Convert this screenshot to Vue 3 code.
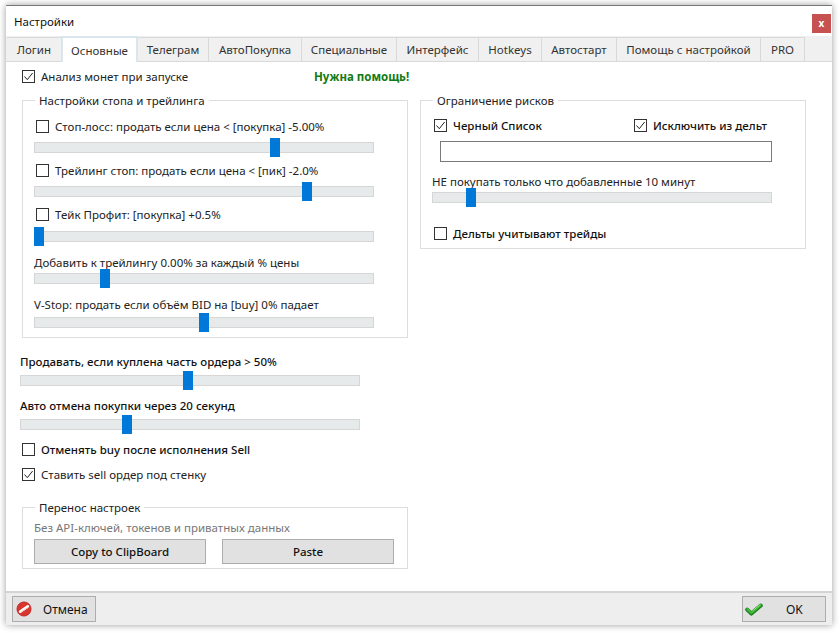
<script setup>
const tabs = [
  { label: 'Логин', w: 55 },
  { label: 'Основные', w: 77, active: true },
  { label: 'Телеграм', w: 71 },
  { label: 'АвтоПокупка', w: 93 },
  { label: 'Специальные', w: 95 },
  { label: 'Интерфейс', w: 82 },
  { label: 'Hotkeys', w: 63 },
  { label: 'Автостарт', w: 75 },
  { label: 'Помощь с настройкой', w: 144 },
  { label: 'PRO', w: 44 }
]
const pct = (center) => ({ left: `${center - 6}px` })
</script>

<template>
  <div class="page">
    <div class="window">
      <header class="title">
        <span>Настройки</span>
        <button class="close">x</button>
      </header>
      <nav class="tabs">
        <div v-for="t in tabs" :key="t.label" class="tab" :class="{ active: t.active }" :style="{ width: t.w + 'px' }">{{ t.label }}</div>
      </nav>
      <main class="content">
        <div class="top-row">
          <label class="check top-check"><span class="box"><svg viewBox="0 0 11 11"><path d="M1.5 5.5 4.3 8.7 9.6 2" /></svg></span>Анализ монет при запуске</label>
          <span class="help">Нужна помощь!</span>
        </div>
        <div class="columns">
          <fieldset class="group stop">
            <legend>Настройки стопа и трейлинга</legend>
            <label class="check c1"><span class="box"></span>Стоп-лосс: продать если цена &lt; [покупка] -5.00%</label>
            <div class="track t1"><i class="thumb" :style="pct(241)"></i></div>
            <label class="check c2"><span class="box"></span>Трейлинг стоп: продать если цена &lt; [пик] -2.0%</label>
            <div class="track t2"><i class="thumb" :style="pct(273)"></i></div>
            <label class="check c3"><span class="box"></span>Тейк Профит: [покупка] +0.5%</label>
            <div class="track t3"><i class="thumb" :style="pct(5)"></i></div>
            <p class="line l1">Добавить к трейлингу 0.00% за каждый % цены</p>
            <div class="track t4"><i class="thumb" :style="pct(71)"></i></div>
            <p class="line l2">V-Stop: продать если объём BID на [buy] 0% падает</p>
            <div class="track t5"><i class="thumb" :style="pct(170)"></i></div>
          </fieldset>
          <fieldset class="group risk">
            <legend>Ограничение рисков</legend>
            <div class="risk-checks">
              <label class="check strong"><span class="box"><svg viewBox="0 0 11 11"><path d="M1.5 5.5 4.3 8.7 9.6 2" /></svg></span>Черный Список</label>
              <label class="check strong"><span class="box"><svg viewBox="0 0 11 11"><path d="M1.5 5.5 4.3 8.7 9.6 2" /></svg></span>Исключить из дельт</label>
            </div>
            <div class="input"></div>
            <p class="line r-line">НЕ покупать только что добавленные 10 минут</p>
            <div class="track r-track"><i class="thumb" :style="pct(39)"></i></div>
            <label class="check strong r-check"><span class="box"></span>Дельты учитывают трейды</label>
          </fieldset>
        </div>
        <section class="lower">
          <p class="line medium m1">Продавать, если куплена часть ордера &gt; 50%</p>
          <div class="track m-t1"><i class="thumb" :style="pct(168)"></i></div>
          <p class="line medium m2">Авто отмена покупки через 20 секунд</p>
          <div class="track m-t2"><i class="thumb" :style="pct(107)"></i></div>
          <label class="check strong m-c1"><span class="box"></span>Отменять buy после исполнения Sell</label>
          <label class="check m-c2"><span class="box"><svg viewBox="0 0 11 11"><path d="M1.5 5.5 4.3 8.7 9.6 2" /></svg></span>Ставить sell ордер под стенку</label>
        </section>
        <fieldset class="group transfer">
          <legend>Перенос настроек</legend>
          <p class="hint">Без API-ключей, токенов и приватных данных</p>
          <div class="actions">
            <button class="action">Copy to ClipBoard</button>
            <button class="action">Paste</button>
          </div>
        </fieldset>
      </main>
      <footer class="footer">
        <button class="fbtn cancel">
          <svg viewBox="0 0 16 16" class="ficon">
            <circle cx="8" cy="8" r="7" fill="#d9342e" stroke="#c22a28" stroke-width="1"/>
            <path d="M4.2 10.6 11.8 5.4" stroke="#fff" stroke-width="2.8" stroke-linecap="round"/>
            <path d="M5 11.2 12 6.6" stroke="#f3b9b5" stroke-width="0.9"/>
          </svg>
          <span>Отмена</span>
        </button>
        <button class="fbtn ok">
          <svg viewBox="0 0 18 13" class="okicon">
            <path d="M2.2 6.6 6.4 10.6 15.8 2.6" fill="none" stroke="#177f1d" stroke-width="4" stroke-linecap="round" stroke-linejoin="round"/>
            <path d="M2.4 6.2 6.4 10 15.6 2.2" fill="none" stroke="#45b83a" stroke-width="2.2" stroke-linecap="round" stroke-linejoin="round"/>
            <path d="M7.4 8 15 1.9" fill="none" stroke="#a9e89a" stroke-width="0.8"/>
          </svg>
          <span>OK</span>
        </button>
      </footer>
    </div>
  </div>
</template>

<style>
html, body { margin: 0; background: #fff; }
</style>

<style scoped>
.page {
  width: 840px;
  height: 633px;
  padding: 5px 8px 8px 6px;
  box-sizing: border-box;
  overflow: hidden;
  background: #fff;
  font-family: "Noto Sans", "Open Sans", sans-serif;
  font-size: 11.5px;
  color: #222;
}
.window {
  height: 620px;
  display: flex;
  flex-direction: column;
  box-sizing: border-box;
  background: #fff;
  border-top: 1px solid #777;
  box-shadow: 0 0 7px rgba(0, 0, 0, 0.4);
}
.title {
  height: 30px;
  flex: none;
  display: flex;
  align-items: center;
  justify-content: space-between;
  padding: 0 1px 0 8px;
  color: #111;
}
.close {
  width: 19px;
  height: 19px;
  margin-top: 5px;
  padding: 0 0 2px;
  border: 0;
  background: #c75050;
  color: #fff;
  font: bold 10px "Noto Sans", sans-serif;
}
.tabs {
  height: 26px;
  flex: none;
  box-sizing: border-box;
  display: flex;
  align-items: flex-end;
  padding-left: 1px;
  background: #f0f0f0;
  border-bottom: 1px solid #d9d9d9;
}
.tab {
  height: 24px;
  box-sizing: border-box;
  display: flex;
  align-items: center;
  justify-content: center;
  border: 1px solid #d9d9d9;
  border-left: 0;
  border-bottom: 0;
  color: #333;
}
.tab.active {
  height: 26px;
  margin-bottom: -1px;
  background: #fff;
  border: 2px solid #d9e6ee;
  border-bottom: 0;
  margin-left: -1px;
}
.content {
  flex: 1;
  min-height: 0;
  padding: 0 0 0 14px;
  background: #fff;
}
.top-row {
  height: 38px;
  display: flex;
  align-items: flex-start;
  padding: 7px 0 0 2px;
  box-sizing: border-box;
}
.top-check { width: 292px; }
.help { font-weight: 700; color: #117a11; line-height: 15px; }
.check {
  display: flex;
  align-items: center;
  gap: 6px;
  height: 15px;
  white-space: nowrap;
}
.box {
  width: 13px;
  height: 13px;
  flex: none;
  box-sizing: border-box;
  border: 1px solid #333;
  background: #fff;
  display: block;
}
.box svg { display: block; width: 11px; height: 11px; }
.box path { fill: none; stroke: #222; stroke-width: 1; }
.strong { font-weight: 500; color: #111; }
.medium { font-weight: 500; color: #111; }
.line { margin: 0; height: 15px; line-height: 15px; white-space: nowrap; }
.columns { display: flex; align-items: flex-start; gap: 12px; margin-left: 2px; }
.group {
  margin: 0;
  padding: 0;
  width: 386px;
  box-sizing: border-box;
  border: 1px solid #ddd;
  min-width: 0;
}
.group legend {
  margin-left: 1px;
  padding: 0 4px 0 4px;
  line-height: 15px;
  color: #222;
}
.stop { height: 245px; padding: 0 0 0 11px; margin-top: -7px; }
.risk { height: 156px; padding: 0 0 0 11px; margin-top: -7px; }
.track {
  position: relative;
  width: 340px;
  height: 11px;
  box-sizing: border-box;
  background: #e7eaea;
  border: 1px solid #d6d6d6;
}
.thumb {
  position: absolute;
  top: -5px;
  width: 10px;
  height: 19px;
  background: #0078d7;
}
.c1 { margin: 11px 0 0 2px; }
.t1 { margin-top: 8px; }
.c2 { margin: 10px 0 0 2px; }
.t2 { margin-top: 8px; }
.c3 { margin: 10px 0 0 2px; }
.t3 { margin-top: 9px; }
.l1 { margin-top: 13px; }
.t4 { margin-top: 3px; }
.l2 { margin-top: 13px; }
.t5 { margin-top: 5px; }
.risk-checks { display: flex; gap: 0; margin: 10px 0 0 2px; }
.risk-checks .check:first-child { width: 200px; }
.input {
  width: 332px;
  height: 21px;
  margin: 8px 0 0 8px;
  border: 1px solid #7a7a7a;
  box-sizing: border-box;
}
.r-line { margin-top: 12px; }
.r-track { margin-top: 3px; }
.r-check { margin: 23px 0 0 2px; }
.lower { margin-left: 0; margin-top: 16px; }
.m1 { margin-top: 0; }
.m-t1 { margin-top: 6px; }
.m2 { margin-top: 12px; }
.m-t2 { margin-top: 6px; }
.m-c1 { margin: 12px 0 0 2px; }
.m-c2 { margin: 10px 0 0 2px; }
.transfer { height: 69px; margin: 18px 0 0 2px; padding: 0 0 0 11px; }
.hint { margin: 5px 0 0; height: 15px; line-height: 15px; color: #777; }
.actions { display: flex; gap: 16px; margin-top: 4px; }
.action {
  width: 172px;
  height: 25px;
  padding: 0;
  border: 1px solid #adadad;
  background: #e1e1e1;
  color: #111;
  font: 500 11.5px "Noto Sans", sans-serif;
}
.footer {
  height: 34px;
  flex: none;
  box-sizing: border-box;
  display: flex;
  align-items: center;
  justify-content: space-between;
  padding: 0 6px 0 6px;
  background: #eee;
  border-top: 2px solid #d4d4d4;
}
.fbtn {
  position: relative;
  width: 84px;
  height: 26px;
  padding: 0;
  border: 1px solid #adadad;
  background: #e1e1e1;
  color: #111;
  display: flex;
  align-items: center;
  font: 12px "Noto Sans", sans-serif;
}
.ficon { width: 16px; height: 16px; margin-left: 3px; }
.cancel span { margin-left: 11px; }
.okicon { width: 18px; height: 13px; margin-left: 2px; }
.ok span { margin-left: 23px; }
</style>
